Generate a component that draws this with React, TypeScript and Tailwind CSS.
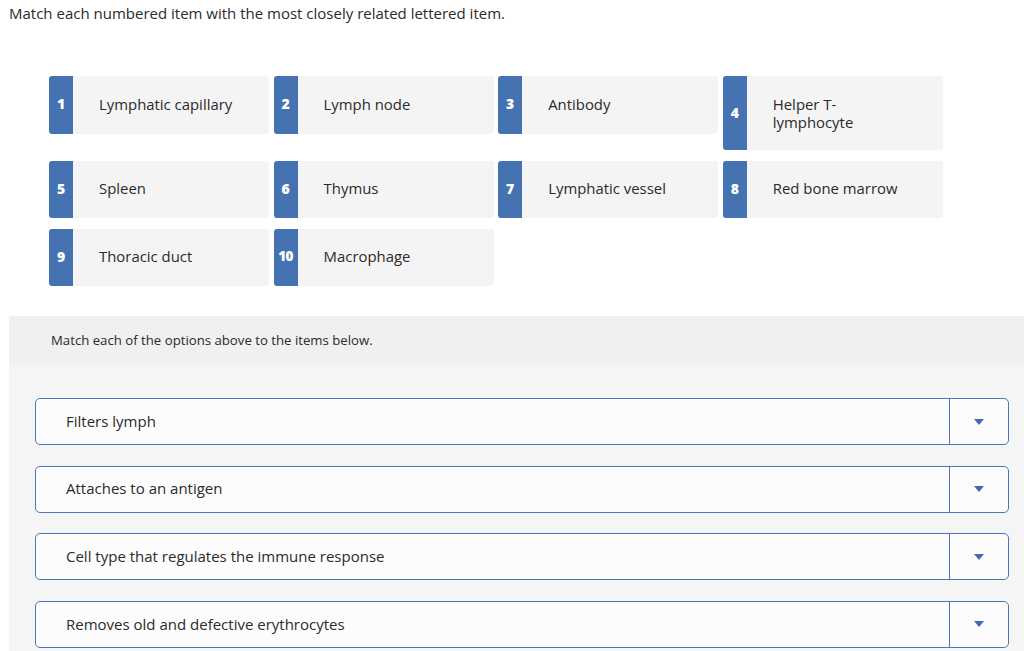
import React from "react";

const items: [string, string][] = [
  ["1", "Lymphatic capillary"],
  ["2", "Lymph node"],
  ["3", "Antibody"],
  ["4", "Helper T-\nlymphocyte"],
  ["5", "Spleen"],
  ["6", "Thymus"],
  ["7", "Lymphatic vessel"],
  ["8", "Red bone marrow"],
  ["9", "Thoracic duct"],
  ["10", "Macrophage"],
];

const rows = [
  "Filters lymph",
  "Attaches to an antigen",
  "Cell type that regulates the immune response",
  "Removes old and defective erythrocytes",
];

export default function App() {
  return (
    <div
      className="w-[1024px] h-[651px] overflow-hidden bg-white text-[#2b2b2b]"
      style={{ fontFamily: "'Open Sans', Arial, sans-serif" }}
    >
      <div className="pl-[9px] pt-[3px] text-[15px] leading-[20px]">
        Match each numbered item with the most closely related lettered item.
      </div>
      <div className="pl-[49px] pt-[53px] flex flex-wrap items-start gap-x-[4.6px] gap-y-[10.5px] w-[960px]">
        {items.map(([n, t]) => (
          <div key={n} className="w-[220px] min-h-[57.5px] flex rounded-[3px] bg-[#f4f4f4] overflow-hidden">
            <div className="w-[24px] shrink-0 bg-[#4573b2] text-white font-extrabold text-[14px] flex items-center justify-center pb-[2px]">
              {n === "10" ? <span className="text-[13.5px] tracking-[-0.6px]">10</span> : n}
            </div>
            <div className={`flex items-center pl-[26px] pr-2 pb-[2px] text-[14.9px] leading-[18px] whitespace-pre-line ${n === "4" ? "pt-[19px] pb-[19px]" : ""}`}>
              {t}
            </div>
          </div>
        ))}
      </div>
      <div className="ml-[9px] mt-[30px] rounded-tl-[3px] overflow-hidden">
        <div className="h-[49px] bg-[#f0f0f0] flex items-center pl-[42px] pt-[1px] text-[13.2px]">
          Match each of the options above to the items below.
        </div>
        <div className="bg-[#f5f5f5] pl-[26px] pr-[15px] pt-[33px] pb-[10px] flex flex-col gap-[20.6px]">
          {rows.map((r) => (
            <div key={r} className="h-[47px] flex border border-[#4a76b8] rounded-[5px] bg-[#fcfcfc]">
              <div className="flex-1 flex items-center pl-[30px] pb-[1px] text-[15px]">{r}</div>
              <div className="w-[59px] border-l border-[#4a76b8] flex items-center justify-center">
                <svg width="10" height="6" viewBox="0 0 10 6">
                  <path d="M0 0 H10 L5 6 Z" fill="#3f6cb0" />
                </svg>
              </div>
            </div>
          ))}
        </div>
      </div>
    </div>
  );
}
